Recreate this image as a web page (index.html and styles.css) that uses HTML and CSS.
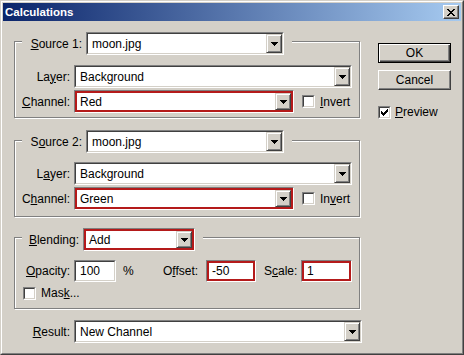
FILE: index.html
```html
<!DOCTYPE html>
<html>
<head>
<meta charset="utf-8">
<title>Calculations</title>
<link rel="stylesheet" href="styles.css">
</head>
<body>
<div class="window">
  <div class="frame">
    <div class="titlebar">
      <span class="title">Calculations</span>
      <span class="close"><svg width="8" height="7" viewBox="0 0 8 7" shape-rendering="crispEdges"><path d="M0 0h2v1h-2zM6 0h2v1h-2zM1 1h2v1h-2zM5 1h2v1h-2zM2 2h4v1h-4zM3 3h2v1h-2zM2 4h4v1h-4zM1 5h2v1h-2zM5 5h2v1h-2zM0 6h2v1h-2zM6 6h2v1h-2z" fill="#000"/></svg></span>
    </div>
    <div class="content">
      <div class="main">
        <div class="group g1">
          <div class="legend">
            <span class="hlbl"><u>S</u>ource 1:</span>
            <div class="combo w-src"><div class="combo-in"><span class="val">moon.jpg</span><span class="dd"><svg width="7" height="4" viewBox="0 0 7 4" shape-rendering="crispEdges"><path d="M0 0h7v1h-1v1h-1v1h-1v1h-1v-1h-1v-1h-1v-1h-1z" fill="#000"/></svg></span></div></div>
          </div>
          <div class="row r-first">
            <span class="lbl">La<u>y</u>er:</span>
            <div class="combo w-layer"><div class="combo-in"><span class="val">Background</span><span class="dd"><svg width="7" height="4" viewBox="0 0 7 4" shape-rendering="crispEdges"><path d="M0 0h7v1h-1v1h-1v1h-1v1h-1v-1h-1v-1h-1v-1h-1z" fill="#000"/></svg></span></div></div>
          </div>
          <div class="row r-second">
            <span class="lbl"><u>C</u>hannel:</span>
            <div class="combo red w-chan"><div class="combo-in"><span class="val">Red</span><span class="dd"><svg width="7" height="4" viewBox="0 0 7 4" shape-rendering="crispEdges"><path d="M0 0h7v1h-1v1h-1v1h-1v1h-1v-1h-1v-1h-1v-1h-1z" fill="#000"/></svg></span></div></div>
            <span class="cb invert"><span class="cb-in"></span></span>
            <span class="cb-text"><u>I</u>nvert</span>
          </div>
        </div>

        <div class="group g2">
          <div class="legend">
            <span class="hlbl">S<u>o</u>urce 2:</span>
            <div class="combo w-src"><div class="combo-in"><span class="val">moon.jpg</span><span class="dd"><svg width="7" height="4" viewBox="0 0 7 4" shape-rendering="crispEdges"><path d="M0 0h7v1h-1v1h-1v1h-1v1h-1v-1h-1v-1h-1v-1h-1z" fill="#000"/></svg></span></div></div>
          </div>
          <div class="row r-first">
            <span class="lbl">L<u>a</u>yer:</span>
            <div class="combo w-layer"><div class="combo-in"><span class="val">Background</span><span class="dd"><svg width="7" height="4" viewBox="0 0 7 4" shape-rendering="crispEdges"><path d="M0 0h7v1h-1v1h-1v1h-1v1h-1v-1h-1v-1h-1v-1h-1z" fill="#000"/></svg></span></div></div>
          </div>
          <div class="row r-second">
            <span class="lbl">C<u>h</u>annel:</span>
            <div class="combo red w-chan"><div class="combo-in"><span class="val">Green</span><span class="dd"><svg width="7" height="4" viewBox="0 0 7 4" shape-rendering="crispEdges"><path d="M0 0h7v1h-1v1h-1v1h-1v1h-1v-1h-1v-1h-1v-1h-1z" fill="#000"/></svg></span></div></div>
            <span class="cb invert"><span class="cb-in"></span></span>
            <span class="cb-text">In<u>v</u>ert</span>
          </div>
        </div>

        <div class="group g3">
          <div class="legend">
            <span class="hlbl blbl"><u>B</u>lending:</span>
            <div class="combo red w-blend"><div class="combo-in"><span class="val">Add</span><span class="dd"><svg width="7" height="4" viewBox="0 0 7 4" shape-rendering="crispEdges"><path d="M0 0h7v1h-1v1h-1v1h-1v1h-1v-1h-1v-1h-1v-1h-1z" fill="#000"/></svg></span></div></div>
          </div>
          <div class="row r-opacity">
            <span class="lbl"><u>O</u>pacity:</span>
            <div class="inp w-op"><div class="inp-in">100</div></div>
            <span class="pct">%</span>
            <span class="off-l">O<u>f</u>fset:</span>
            <div class="inp red w-off"><div class="inp-in">-50</div></div>
            <span class="sc-l">S<u>c</u>ale:</span>
            <div class="inp red w-sc"><div class="inp-in">1</div></div>
          </div>
          <div class="row r-mask">
            <span class="cb"><span class="cb-in"></span></span>
            <span class="cb-text">Mas<u>k</u>...</span>
          </div>
        </div>

        <div class="row r-result">
          <span class="lbl res-lbl"><u>R</u>esult:</span>
          <div class="combo w-result"><div class="combo-in"><span class="val">New Channel</span><span class="dd"><svg width="7" height="4" viewBox="0 0 7 4" shape-rendering="crispEdges"><path d="M0 0h7v1h-1v1h-1v1h-1v1h-1v-1h-1v-1h-1v-1h-1z" fill="#000"/></svg></span></div></div>
        </div>
      </div>

      <div class="side">
        <div class="btn default">OK</div>
        <div class="btn cancel">Cancel</div>
        <div class="preview">
          <span class="cb"><span class="cb-in"><svg width="7" height="7" viewBox="0 0 7 7" shape-rendering="crispEdges"><path d="M6 0h1v3h-1zM5 1h1v3h-1zM4 2h1v3h-1zM3 3h1v3h-1zM2 4h1v3h-1zM1 3h1v3h-1zM0 2h1v3h-1z" fill="#000"/></svg></span></span>
          <span class="cb-text"><u>P</u>review</span>
        </div>
      </div>
    </div>
  </div>
</div>
</body>
</html>
```

FILE: styles.css
```css
* { box-sizing: border-box; }
html, body { margin: 0; padding: 0; }
body {
  width: 464px;
  height: 355px;
  overflow: hidden;
  background: #d4d0c8;
  font-family: "Liberation Sans", Arial, sans-serif;
  font-size: 12px;
  color: #000;
}
u { text-decoration: underline; text-underline-offset: 1px; }

.window {
  width: 464px;
  height: 355px;
  border: 1px solid;
  border-color: #d4d0c8 #404040 #404040 #d4d0c8;
}
.frame {
  height: 100%;
  border: 1px solid;
  border-color: #fff #808080 #808080 #fff;
  padding: 1px;
  background: #d4d0c8;
}
.titlebar {
  height: 18px;
  background: linear-gradient(to right, #0a246a, #a6caf0);
  display: flex;
  align-items: center;
  justify-content: space-between;
  padding: 0 2px 0 2px;
}
.title {
  color: #fff;
  font-weight: bold;
  font-size: 11.5px;
}
.close {
  width: 16px;
  height: 14px;
  background: #d4d0c8;
  border: 1px solid;
  border-color: #fff #404040 #404040 #fff;
  box-shadow: inset -1px -1px #808080;
  display: flex;
  align-items: center;
  justify-content: center;
  padding-right: 1px;
}
.close svg { display: block; }

.content {
  display: flex;
  padding: 20px 0 0 11px;
}
.main {
  width: 348px;
  display: flex;
  flex-direction: column;
}
.side {
  width: 73px;
  margin-left: 16px;
  padding-top: 2px;
  display: flex;
  flex-direction: column;
}

.group {
  width: 346px;
  border: 1px solid #808080;
  box-shadow: 1px 1px 0 #fff, inset 1px 1px 0 #fff;
  display: flex;
  flex-direction: column;
}
.g1 { height: 77px; }
.g2 { height: 77px; margin-top: 22px; }
.g3 { height: 72px; margin-top: 20px; }

.legend {
  align-self: flex-start;
  display: flex;
  align-items: center;
  margin: -10px 0 0 7px;
  padding-right: 8px;
  background: #d4d0c8;
}
.g2 .legend { margin-top: -11px; }
.hlbl {
  width: 60px;
  text-align: right;
  margin-right: 4px;
  white-space: nowrap;
}
.blbl { width: 57px; }

.row {
  display: flex;
  align-items: center;
}
.lbl {
  width: 55px;
  text-align: right;
  margin-right: 4px;
  white-space: nowrap;
}
.r-first { margin-top: 10px; }
.g2 .r-first { margin-top: 9px; }
.r-second { margin-top: 2px; }

.combo {
  height: 23px;
  border: 1px solid;
  border-color: #808080 #fff #fff #808080;
}
.combo-in {
  height: 100%;
  border: 1px solid;
  border-color: #404040 #d4d0c8 #d4d0c8 #404040;
  background: #fff;
  display: flex;
}
.combo.red .combo-in { border: 2px solid #b41a1a; }
.val {
  flex: 1;
  padding-left: 4px;
  display: flex;
  align-items: center;
  white-space: nowrap;
}
.combo.red .val { padding-left: 3px; }
.dd {
  width: 16px;
  height: 100%;
  background: #d4d0c8;
  border: 1px solid;
  border-color: #d4d0c8 #404040 #404040 #d4d0c8;
  box-shadow: inset 1px 1px #fff, inset -1px -1px #808080;
  display: flex;
  align-items: center;
  justify-content: center;
}
.dd svg { display: block; }
.w-src { width: 198px; }
.w-layer { width: 278px; }
.w-chan { width: 220px; }
.w-blend { width: 112px; }
.w-result { width: 288px; }

.cb {
  width: 13px;
  height: 13px;
  border: 1px solid;
  border-color: #808080 #fff #fff #808080;
  flex: none;
}
.cb-in {
  display: flex;
  align-items: center;
  justify-content: center;
  width: 100%;
  height: 100%;
  border: 1px solid;
  border-color: #404040 #d4d0c8 #d4d0c8 #404040;
  background: #fff;
}
.cb-in svg { display: block; }
.cb-text { margin-left: 5px; white-space: nowrap; }
.invert { margin-left: 8px; }

.r-opacity { margin-top: 9px; }
.inp {
  height: 22px;
  border: 1px solid;
  border-color: #808080 #fff #fff #808080;
}
.inp-in {
  height: 100%;
  border: 1px solid;
  border-color: #404040 #d4d0c8 #d4d0c8 #404040;
  background: #fff;
  padding-left: 4px;
  display: flex;
  align-items: center;
}
.inp.red .inp-in { border: 2px solid #b41a1a; padding-left: 3px; }
.w-op { width: 42px; }
.w-off { width: 50px; }
.w-sc { width: 51px; }
.pct { margin-left: 7px; width: 40px; }
.off-l { width: 43px; }
.sc-l { margin-left: 8px; width: 37px; }

.r-mask { margin-top: 4px; padding-left: 8px; }
.r-mask .cb-text { margin-left: 5px; }

.r-result { margin-top: 11px; }
.res-lbl { width: 56px; }

.btn {
  width: 73px;
  height: 20px;
  background: #d4d0c8;
  border: 1px solid;
  border-color: #fff #404040 #404040 #fff;
  box-shadow: inset -1px -1px #808080;
  display: flex;
  align-items: center;
  justify-content: center;
}
.btn.default {
  border: 1px solid #000;
  box-shadow: inset 1px 1px #fff, inset -1px -1px #404040, inset -2px -2px #808080;
}
.cancel { margin-top: 7px; }
.preview {
  margin-top: 15px;
  display: flex;
  align-items: center;
}
.preview .cb-text { margin-left: 4px; }
```
